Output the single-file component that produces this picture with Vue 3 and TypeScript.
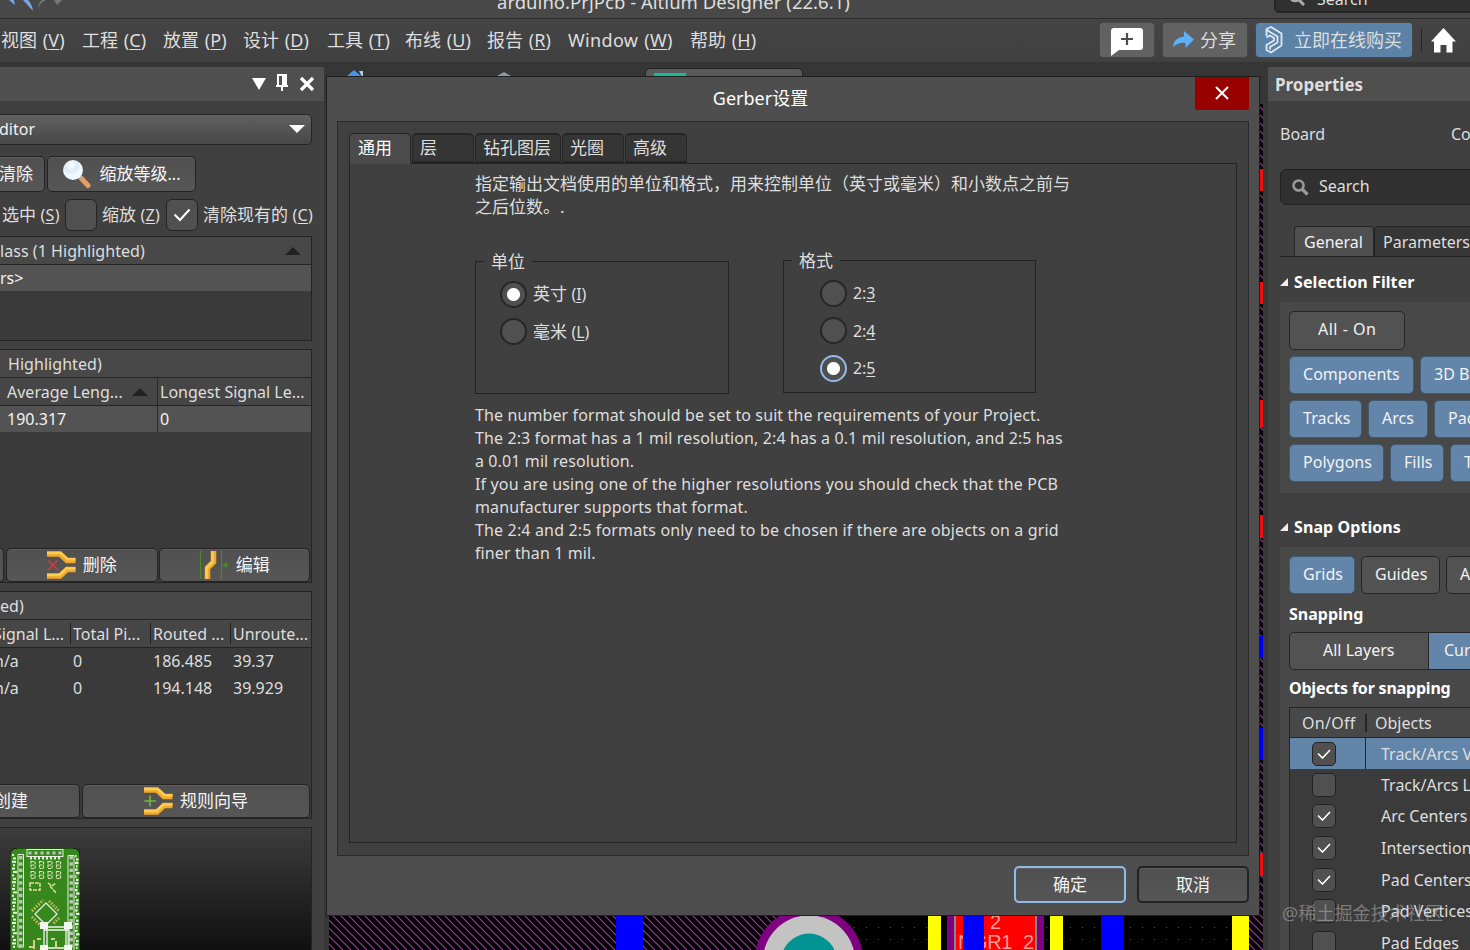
<script setup lang="ts">
interface Label { text: string; key: string }

const menus: Label[] = [
  { text: '视图', key: 'V' }, { text: '工程', key: 'C' }, { text: '放置', key: 'P' },
  { text: '设计', key: 'D' }, { text: '工具', key: 'T' }, { text: '布线', key: 'U' },
  { text: '报告', key: 'R' }, { text: 'Window', key: 'W' }, { text: '帮助', key: 'H' },
]
const units = [
  { text: '英寸', key: 'I', on: true },
  { text: '毫米', key: 'L', on: false },
]
const formats = [
  { key: '3', on: false }, { key: '4', on: false }, { key: '5', on: true },
]
const notes: string[] = [
  'The number format should be set to suit the requirements of your Project.',
  'The 2:3 format has a 1 mil resolution, 2:4 has a 0.1 mil resolution, and 2:5 has',
  'a 0.01 mil resolution.',
  'If you are using one of the higher resolutions you should check that the PCB',
  'manufacturer supports that format.',
  'The 2:4 and 2:5 formats only need to be chosen if there are objects on a grid',
  'finer than 1 mil.',
]
const snapRows = [
  { name: 'Track/Arcs Vertices', on: true }, { name: 'Track/Arcs Lines', on: false },
  { name: 'Arc Centers', on: true }, { name: 'Intersections', on: true },
  { name: 'Pad Centers', on: true }, { name: 'Pad Vertices', on: false },
  { name: 'Pad Edges', on: false },
]
const edgePads = [
  { y: 65, h: 22, c: '#f00f0f' }, { y: 178, h: 22, c: '#f00f0f' }, { y: 296, h: 27, c: '#f00f0f' },
  { y: 411, h: 23, c: '#f00f0f' }, { y: 532, h: 22, c: '#0000f0' }, { y: 624, h: 32, c: '#0000f0' },
  { y: 749, h: 23, c: '#f00f0f' },
]
const pins = Array.from({ length: 15 }, (_, i) => i)
const silk = Array.from({ length: 28 }, (_, i) => ({ y: 6 + i * 3.4, w: 2 + ((i * 7) % 3), o: (i * 5) % 2 }))
</script>

<template>
  <div class="screen">
    <header class="titlebar">
      <svg class="undo" width="66" height="18" viewBox="0 0 66 18">
        <path d="M9 0 L15 5 L14 0 Z M23 0 L33 11 Q32 4 28 0 Z" fill="#7ba4e8" />
        <path d="M38 10 Q39 3 46 0 L42 0 Q38 3 38 10Z M54 0 L57 5 L62 0Z" fill="#777" />
      </svg>
      <span class="app-title">arduino.PrjPcb - Altium Designer (22.6.1)</span>
      <div class="top-search">
        <svg width="18" height="18" viewBox="0 0 18 18"><circle cx="7" cy="7" r="5" fill="none" stroke="#aaa" stroke-width="2.6" /><path d="M11 11l5 5" stroke="#aaa" stroke-width="3" /></svg>
        <span>Search</span>
      </div>
    </header>

    <nav class="menubar">
      <div class="menus">
        <span v-for="m in menus" :key="m.key">{{ m.text }} (<u>{{ m.key }}</u>)</span>
      </div>
      <div class="actions">
        <button class="act note">
          <svg width="32" height="28" viewBox="0 0 32 28"><path d="M3 0H29Q32 0 32 3V19Q32 22 29 22H8L0 28V3Q0 0 3 0Z" fill="#fff" /><path d="M16 5V17M10 11H22" stroke="#4d4d4d" stroke-width="2.2" /></svg>
        </button>
        <button class="act share">
          <svg width="22" height="18" viewBox="0 0 22 18"><path d="M12 0L22 8.5L13.5 17V12Q6 11 1 16.500Q1 7 12 5.500Z" fill="#5eb0f7" /></svg>
          <span>分享</span>
        </button>
        <button class="act buy">
          <svg width="18" height="28" viewBox="0 0 18 28" fill="none" stroke="#dde8f2" stroke-width="1.8" stroke-linejoin="round">
            <path d="M1.500 10V3L6 1L16.500 7.500V19.500L6 26.500L1.500 24V19L9 14.500V12L5 9.500L1.500 11.500" />
            <path d="M5 6L12.500 10.500V16.500L5 21V23.500M1.500 3.500L5 6" />
          </svg>
          <span>立即在线购买</span>
        </button>
        <i class="rule"></i>
        <svg width="25" height="25" viewBox="0 0 25 25"><path d="M12.500 0L25 13.500H21.500V24.500H15.500V17H9.500V24.500H3V13.500H0Z" fill="#fff" /></svg>
      </div>
    </nav>

    <main class="work">
      <aside class="left">
        <div class="panel-head tools">
          <svg width="64" height="20" viewBox="0 0 64 20">
            <path d="M0 5H14L7 17Z" fill="#fff" />
            <path d="M24 1H35V12H36V14H31V18H29V14H24V12H25V1Z" fill="#fff" />
            <path d="M27 3H30V12H27Z" fill="#505050" />
            <path d="M49 5L61 17M61 5L49 17" stroke="#fff" stroke-width="3.2" />
          </svg>
        </div>
        <div class="combo"><span>ditor</span><svg width="16" height="8"><path d="M0 0H16L8 8Z" fill="#fff" /></svg></div>
        <div class="row-buttons">
          <button class="btn clear">清除</button>
          <button class="btn zoom">
            <svg width="30" height="30" viewBox="0 0 30 30">
              <defs><radialGradient id="lens" cx=".4" cy=".25"><stop offset="0" stop-color="#fff" /><stop offset=".65" stop-color="#dceaf4" /><stop offset="1" stop-color="#eef8ff" /></radialGradient></defs>
              <path d="M19 19L26 26.500" stroke="#e3a060" stroke-width="5" stroke-linecap="round" />
              <path d="M16 16L20 20" stroke="#a9b0b5" stroke-width="3" />
              <circle cx="11" cy="11" r="10" fill="url(#lens)" />
            </svg>
            <span>缩放等级<b>...</b></span>
          </button>
        </div>
        <div class="row-checks">
          <span class="ck sel">选中 <b>(<u>S</u>)</b></span><i class="box"></i>
          <span class="ck zm">缩放 <b>(<u>Z</u>)</b></span>
          <i class="box"><svg width="18" height="14" viewBox="0 0 18 14"><path d="M1.500 6.500L7 12L16.500 1.500" fill="none" stroke="#fff" stroke-width="2" /></svg></i>
          <span class="ck">清除现有的 <b>(<u>C</u>)</b></span>
        </div>
        <section class="list one">
          <div class="lh"><span>lass (1 Highlighted)</span><svg width="16" height="8"><path d="M0 8H16L8 0Z" fill="#222" /></svg></div>
          <div class="lr lit"><span>rs&gt;</span></div>
        </section>
        <section class="list two">
          <div class="lh"><span>Highlighted)</span></div>
          <div class="cols"><span>Average Leng...<svg width="16" height="8"><path d="M0 8H16L8 0Z" fill="#222" /></svg></span><span>Longest Signal Le...</span></div>
          <div class="cols lit"><span>190.317</span><span>0</span></div>
          <div class="foot">
            <button class="btn stub"></button>
            <button class="btn">
              <svg width="29" height="28" viewBox="0 0 29 28">
                <path d="M0 3H13L20 9.500H28.500M0 25H13L20 18.500H28.500" fill="none" stroke="#f2a92b" stroke-width="5.500" />
                <path d="M0 2H13.500L20.500 8.200H28.500M0 24H12.500L19.500 17.500H28.500" fill="none" stroke="#ffcb54" stroke-width="2.500" />
                <path d="M1.500 9.500L10.500 18.500M10.500 9.500L1.500 18.500" stroke="#d83a3f" stroke-width="1.500" />
              </svg>
              <span>删除</span>
            </button>
            <button class="btn">
              <svg width="30" height="28" viewBox="0 0 30 28">
                <path d="M1.500 0V28M22.500 0V28" stroke="#4f8a28" stroke-width="1.200" />
                <path d="M14.500 0V11L8.500 17V28" fill="none" stroke="#f2a92b" stroke-width="5.500" />
                <path d="M13.500 0V11L7.500 17V28" fill="none" stroke="#ffcb54" stroke-width="2.500" />
                <path d="M23 14L28 11V17ZM27 13.500H30V14.500H27Z" fill="#4f8a28" />
              </svg>
              <span>编辑</span>
            </button>
          </div>
        </section>
        <section class="list three">
          <div class="lh"><span>ed)</span></div>
          <div class="cols head"><span class="cut">Signal L...</span><span>Total Pi...</span><span>Routed ...</span><span>Unroute...</span></div>
          <div class="cols"><span class="cut na">n/a</span><span>0</span><span>186.485</span><span>39.37</span></div>
          <div class="cols"><span class="cut na">n/a</span><span>0</span><span>194.148</span><span>39.929</span></div>
          <div class="foot">
            <button class="btn create">创建</button>
            <button class="btn">
              <svg width="29" height="28" viewBox="0 0 29 28">
                <path d="M0 3H13L20 9.500H28.500M0 25H13L20 18.500H28.500" fill="none" stroke="#f2a92b" stroke-width="5.500" />
                <path d="M0 2H13.500L20.500 8.200H28.500M0 24H12.500L19.500 17.500H28.500" fill="none" stroke="#ffcb54" stroke-width="2.500" />
                <path d="M6 8.500V19.500M.5 14H12" stroke="#72b840" stroke-width="1.600" />
              </svg>
              <span>规则向导</span>
            </button>
          </div>
        </section>
        <section class="preview">
          <svg width="70" height="102" viewBox="0 0 70 102">
            <path d="M0 110V8Q0 0 8 0H62Q70 0 70 8V110Z" fill="#36871c" stroke="#0b1a06" />
            <rect x="17" y="1.500" width="36" height="7" fill="none" stroke="#e4efdf" />
            <rect v-for="n in 6" :key="'t' + n" :x="12.500 + n * 6" y="3.500" width="3" height="3" fill="#b9c9b5" />
            <path d="M8 6.500H13.500V99H8Z M58 7.500H64V110H58Z" fill="none" stroke="#e4efdf" />
            <g v-for="p in pins" :key="p" fill="#b9c9b5">
              <rect x="9" :y="8 + p * 6.300" width="3.400" height="3.400" />
              <rect x="59.500" :y="8 + p * 6.300" width="3.400" height="3.400" />
            </g>
            <g v-for="(s, i) in silk" :key="'s' + i" fill="#e6f2e0">
              <rect :x="2 + s.o" :y="s.y" :width="s.w" height="2" />
              <rect :x="65 + s.o" :y="s.y + 1" :width="s.w - 0.500" height="2.200" />
            </g>
            <g v-for="n in 4" :key="'c' + n">
              <g v-for="r in 2" :key="r" fill="none" stroke="#d8e5ba" stroke-width="1.200">
                <path :d="`M${12.500 + n * 8.500} ${3.500 + r * 10}h4v7h-4zM${12.500 + n * 8.500} ${7 + r * 10}h4`" stroke-dasharray="3 1" />
              </g>
            </g>
            <path d="M20 10H50" stroke="#e4efdf" stroke-width="3" stroke-dasharray="2 2" />
            <path d="M20 35V42H30V35ZM38 35l4 3 4-3M40 38l6 7" fill="none" stroke="#e4e0a0" stroke-width="1.500" stroke-dasharray="4 1" />
            <path d="M36 55L47 66L36 77L25 66Z" fill="none" stroke="#e4efdf" stroke-width="1.300" />
            <path d="M22 63L33 52M39 53L49 63M22 69L32 79M49 70L43 76" stroke="#d6bf62" stroke-width="3" stroke-dasharray="1.500 1.500" />
            <path d="M34 78V102M37 78V102M56 78V102M59 78V102M34 79H58M34 82H58M30 100H60" stroke="#f2f7ef" stroke-width="1.300" />
            <path d="M30 74h8v7h-8zM54 74h8v7h-8zM30 97h8v6h-8zM54 97h8v6h-8z" fill="#f4f8f2" />
            <path d="M27 91h4M41 91h4M24 92v9M46 93v8M19 99h4" stroke="#d6cf8a" stroke-width="2" />
          </svg>
        </section>
      </aside>

      <section class="center">
        <div class="doc-tabs">
          <svg width="20" height="7" viewBox="0 0 20 7"><path d="M0 7L8 0L16 7Z" fill="#4b93ea" /><path d="M13 1H17V7H16Z" fill="#a5cdf5" /></svg>
          <svg class="grey" width="14" height="4" viewBox="0 0 14 4"><path d="M0 4L7 0L14 4Z" fill="#8d9aa5" /></svg>
          <div class="doc"><i></i></div>
        </div>
        <svg class="board" width="934" height="846" viewBox="0 0 934 846">
          <defs>
            <pattern id="hatch" width="8" height="8" patternUnits="userSpaceOnUse"><path d="M-1 -1L9 9M-1 7L1 9M7 -1L9 1" stroke="#b32fb8" stroke-width="1.100" /></pattern>
            <pattern id="dots" width="12" height="12" patternUnits="userSpaceOnUse"><rect x="9" y="7" width="1" height="1" fill="#555" /></pattern>
          </defs>
          <rect width="934" height="846" fill="#000" />
          <rect width="480" height="846" fill="url(#hatch)" />
          <rect x="480" y="800" width="440" height="46" fill="url(#dots)" />
          <rect x="920" width="14" height="846" fill="url(#hatch)" />
          <rect v-for="e in edgePads" :key="e.y" x="931" :y="e.y" width="3" :height="e.h" :fill="e.c" />
          <rect x="287" y="800" width="27" height="46" fill="#00f" />
          <circle cx="480" cy="857.500" r="54.500" fill="#7f0080" />
          <circle cx="480" cy="857.500" r="46.200" fill="#c3c3c3" />
          <circle cx="480" cy="857.500" r="28" fill="#009392" />
          <rect x="599" y="800" width="13" height="46" fill="#ff0" />
          <rect x="618" y="800" width="97" height="46" fill="#7f0080" />
          <rect x="625" y="800" width="83" height="46" fill="#888" />
          <rect x="627" y="800" width="79" height="46" fill="#f00" />
          <text x="629" y="845" class="net" textLength="76">NGR1_2</text>
          <rect x="634" y="800" width="21" height="46" fill="#00f" />
          <text x="661" y="825" class="net">2</text>
          <rect x="721" y="800" width="13" height="46" fill="#ff0" />
          <rect x="772" y="800" width="23" height="46" fill="#00f" />
          <rect x="903" y="800" width="17" height="46" fill="#ff0" />
        </svg>
      </section>

      <aside class="right">
        <div class="panel-head"><b>Properties</b></div>
        <div class="kind"><span>Board</span><span>Components</span></div>
        <div class="search">
          <svg width="17" height="17" viewBox="0 0 17 17"><circle cx="6.500" cy="6.500" r="5" fill="none" stroke="#999" stroke-width="2.600" /><path d="M10.500 10.500L15.500 15.500" stroke="#999" stroke-width="3.200" /></svg>
          <span>Search</span>
        </div>
        <div class="ptabs"><span class="active">General</span><span>Parameters</span></div>
        <h3><svg width="8" height="8"><path d="M0 8H8V0Z" fill="#eee" /></svg><span>Selection Filter</span></h3>
        <div class="group filter">
          <div class="chips"><span class="chip off all">All - On</span></div>
          <div class="chips"><span class="chip c1">Components</span><span class="chip">3D Bodies</span></div>
          <div class="chips"><span class="chip c2">Tracks</span><span class="chip c3">Arcs</span><span class="chip">Pads</span></div>
          <div class="chips"><span class="chip c4">Polygons</span><span class="chip c5">Fills</span><span class="chip">Texts</span></div>
        </div>
        <h3><svg width="8" height="8"><path d="M0 8H8V0Z" fill="#eee" /></svg><span>Snap Options</span></h3>
        <div class="group snap">
          <div class="chips"><span class="chip c6">Grids</span><span class="chip off c7">Guides</span><span class="chip off c8">Axes</span></div>
          <h4>Snapping</h4>
          <div class="seg"><span>All Layers</span><span class="on">Current Layer</span></div>
          <h4 class="second">Objects for snapping</h4>
          <div class="objs">
            <div class="oh"><span>On/Off</span><i></i><span>Objects</span></div>
            <div v-for="(r, i) in snapRows" :key="r.name" class="or" :class="{ hot: i === 0 }">
              <span class="cell"><i class="mini"><svg v-if="r.on" width="14" height="10" viewBox="0 0 14 10"><path d="M1 4.500L5.500 9L13 1" fill="none" stroke="#fff" stroke-width="1.600" /></svg></i></span>
              <span class="nm">{{ r.name }}</span>
            </div>
          </div>
        </div>
      </aside>
    </main>

    <div class="dialog">
      <div class="dlg-head">
        <span>Gerber设置</span>
        <button class="close"><svg width="14" height="14"><path d="M1 1L13 13M13 1L1 13" stroke="#fff" stroke-width="2" /></svg></button>
      </div>
      <div class="dlg-body">
        <div class="dtabs">
          <span class="active">通用</span><span>层</span><span>钻孔图层</span><span>光圈</span><span>高级</span>
        </div>
        <div class="page">
          <p class="intro">指定输出文档使用的单位和格式，用来控制单位（英寸或毫米）和小数点之前与<br>之后位数。.</p>
          <div class="groups">
            <fieldset>
              <legend>单位</legend>
              <label v-for="u in units" :key="u.key"><i class="radio" :class="{ on: u.on }"></i><span>{{ u.text }} <b>(<u>{{ u.key }}</u>)</b></span></label>
            </fieldset>
            <fieldset class="fmt">
              <legend>格式</legend>
              <label v-for="f in formats" :key="f.key"><i class="radio" :class="{ on: f.on, focus: f.on }"></i><span><b>2:<u>{{ f.key }}</u></b></span></label>
            </fieldset>
          </div>
          <div class="notes"><div v-for="n in notes" :key="n">{{ n }}</div></div>
        </div>
      </div>
      <div class="dlg-foot"><button class="btn ok">确定</button><button class="btn">取消</button></div>
    </div>
    <div class="mark">@稀土掘金技术社区</div>
  </div>
</template>

<style>
body { overflow: hidden; background: #404040; }
</style>

<style scoped>
* { box-sizing: border-box; margin: 0; padding: 0; }
.screen { position: relative; width: 1470px; height: 950px; overflow: hidden; display: flex; flex-direction: column; background: #3f3f3f; color: #dedede; font: 16px/22px "Noto Sans", "Noto Sans CJK SC", sans-serif; white-space: nowrap; }
svg { display: block; flex: none; }
button { font: inherit; color: inherit; border: 0; background: none; display: flex; align-items: center; justify-content: center; }
u { text-decoration: underline; text-underline-offset: 2px; text-decoration-thickness: 1px; text-decoration-skip-ink: none; }
b { font-weight: 400; font-size: 16px; }

.titlebar { flex: none; height: 19px; background: #484848; border-bottom: 1px solid #2c2c2c; display: flex; align-items: flex-end; overflow: hidden; }
.undo { width: 66px; }
.app-title { flex: none; margin-left: 431px; width: 777px; font-size: 18.500px; line-height: 24px; margin-bottom: 4px; letter-spacing: .03px; }
.top-search { width: 210px; height: 36px; margin-bottom: 5px; border: 2px solid #262626; border-radius: 5px; background: #303030; display: flex; align-items: flex-end; gap: 11px; padding: 0 0 3px 12px; flex: none; }
.top-search svg { margin-bottom: 1px; }
.top-search span { line-height: 20px; margin-bottom: -1px; }

.menubar { flex: none; height: 43px; display: flex; justify-content: space-between; align-items: center; background: linear-gradient(#444, #404040); }
.menus { display: grid; grid-template-columns: 81px 81px 80px 84px 78px 82px 81px 122px auto; padding: 0 0 2px 1px; font-size: 18px; line-height: 26px; word-spacing: .8px; letter-spacing: .1px; }
.menus span:nth-child(8) { letter-spacing: .35px; }
.actions { display: flex; align-items: center; padding: 0 14px 1px 0; }
.act { height: 34px; border-radius: 4px; background: #626262; font-size: 18px; box-shadow: 0 0 1px #777; }
.note { width: 54px; margin-right: 9px; }
.note svg { margin-top: 3px; }
.share { width: 84px; gap: 6px; margin-right: 9px; padding-right: 2px; }
.share span, .buy span { margin-top: -1px; }
.buy { width: 156px; gap: 11px; padding-right: 1px; background: #5d82a7; }
.rule { width: 1px; height: 22px; background: #252525; margin: 0 9px; }

.work { flex: 1; display: flex; min-height: 0; background: #363636; }
.panel-head { height: 34px; background: #4f4f4f; }
.left { width: 324px; flex: none; margin-top: 5px; background: #404040; overflow: hidden; }
.tools { display: flex; align-items: center; padding: 0 0 2px 252px; }
.combo { height: 31px; width: 312px; margin-top: 13px; border: 1px solid #252525; border-left: 0; border-radius: 0 5px 5px 0; background: linear-gradient(#616161, #474747); display: flex; align-items: center; justify-content: space-between; padding: 0 6px 2px 0; color: #f2f2f2; }
.combo span { margin-left: -1px; }
.btn { border: 1px solid #232323; border-radius: 5px; background: linear-gradient(#505050, #565656); box-shadow: inset 0 1px #5d5d5d; color: #f4f4f4; font-size: 17px; }
.row-buttons { display: flex; gap: 2px; margin-top: 11px; height: 36px; }
.clear { width: 45px; border-left: 0; border-radius: 0 5px 5px 0; justify-content: flex-start; text-indent: -1px; }
.zoom { width: 149px; gap: 8px; padding-right: 1px; }
.row-checks { display: flex; align-items: center; height: 32px; margin-top: 7px; font-size: 17px; }
.ck b { letter-spacing: .3px; }
.sel { width: 65px; padding-left: 2px; }
.zm { width: 64px; }
.box { width: 32px; height: 32px; border: 1px solid #232323; border-radius: 6px; background: #505050; display: flex; align-items: center; justify-content: center; flex: none; margin-right: 5px; }
.list { width: 312px; border: 1px solid #242424; border-left: 0; background: #3a3a3a; display: flex; flex-direction: column; overflow: hidden; }
.one { height: 105px; margin-top: 5px; }
.two { height: 234px; margin-top: 8px; }
.three { height: 228px; margin-top: 8px; }
.lh { height: 28px; flex: none; background: #484848; border-bottom: 1px solid #242424; display: flex; align-items: center; justify-content: space-between; padding-right: 10px; letter-spacing: .05px; }
.two .lh { padding-left: 8px; }
.lr { height: 26px; display: flex; align-items: center; }
.lit { background: #535353 !important; color: #f2f2f2; }
.cols { display: grid; height: 28px; flex: none; align-items: center; }
.two .cols { grid-template-columns: 157px 1fr; background: #464646; border-bottom: 1px solid #242424; }
.two .cols.lit { height: 26px; border: 0; }
.two .cols span { padding-left: 7px; display: flex; align-items: center; gap: 9px; height: 100%; }
.two .cols span + span { border-left: 1px solid #2a2a2a; padding-left: 2px; }
.two .cols.lit span { line-height: 20px; padding-bottom: 1px; }
.three .cols { grid-template-columns: 70px 80px 80px 1fr; height: 27px; }
.three .head { height: 28px; background: #464646; border-bottom: 1px solid #242424; }
.three .cols span { padding-left: 3px; line-height: 20px; padding-bottom: 1px; }
.three .head span { padding: 1px 0 0 2px; }
.three .head span + span { border-left: 1px solid #222; }
.three .cols .cut { padding-left: 0; margin-left: -7px; }
.three .cols .na { margin-left: -6px; }
.foot { margin-top: auto; display: flex; gap: 2px; height: 34px; flex: none; }
.two .foot { gap: 1px; padding-right: 1px; }
.three .foot { padding-right: 1px; }
.foot .btn { flex: 1; gap: 7px; }
.foot .stub { flex: none; width: 4px; margin-right: 1px; border-left: 0; border-radius: 0 5px 5px 0; }
.foot .create { flex: none; width: 80px; border-left: 0; border-radius: 0 5px 5px 0; justify-content: flex-start; text-indent: -6px; }
.preview { width: 312px; height: 130px; margin-top: 8px; border: 1px solid #242424; border-left: 0; background: linear-gradient(#3c3c3c, #101010 95%); padding: 20px 0 0 10px; }

.center { flex: 1; overflow: hidden; }
.doc-tabs { height: 42px; display: flex; padding-left: 22px; }
.doc-tabs > svg { margin-top: 8px; }
.doc-tabs .grey { margin: 10px 0 0 131px; }
.doc { width: 158px; height: 34px; margin: 6px 0 0 134px; background: #5a5a5a; border: 1px solid #222; border-radius: 5px; padding: 4px 0 0 8px; }
.doc i { display: block; width: 32px; height: 6px; background: #13bd98; }
.board { margin-left: 5px; }
.net { font: 20px "Liberation Sans", sans-serif; fill: #ff9c9c; }

.right { width: 202px; flex: none; margin-top: 5px; background: #404040; overflow: hidden; }
.right .panel-head { padding: 7px 7px 0; }
.right b { font-size: 17px; font-weight: 700; }
.kind { margin-top: 22px; display: grid; grid-template-columns: 171px 1fr; padding-left: 12px; }
.search { margin: 24px 0 0 12px; height: 36px; width: 210px; border: 1px solid #222; border-radius: 6px; background: #303030; display: flex; align-items: center; gap: 10px; padding: 0 0 2px 11px; }
.search svg { margin-top: 3px; }
.ptabs { margin: 21px 0 0 12px; padding-left: 14px; height: 31px; border-bottom: 1px solid #242424; display: flex; }
.ptabs span { border: 1px solid #242424; border-bottom: 0; border-radius: 4px 4px 0 0; background: #363636; height: 30px; line-height: 30px; padding: 0 8px; width: 120px; flex: none; }
.ptabs .active { width: 80px; padding-left: 9px; background: #4f4f4f; color: #f2f2f2; }
h3 { font-size: 16px; line-height: 22px; display: flex; align-items: center; gap: 6px; padding-left: 12px; margin-top: 14px; color: #fff; letter-spacing: .08px; }
h4 { font-size: 16px; line-height: 22px; color: #fff; }
.group { margin-left: 12px; padding: 9px 0 0 9px; background: #484848; }
.filter { height: 191px; margin-top: 9px; display: flex; flex-direction: column; gap: 6px; }
.filter .chips:first-child { margin-bottom: 1px; }
.filter + h3 { margin-top: 23px; }
.chips { display: flex; gap: 6px; height: 38px; flex: none; }
.chip { flex: none; width: 100px; height: 38px; border: 1px solid #425970; border-radius: 5px; background: #6285a9; color: #f2f2f2; line-height: 34px; padding-left: 13px; letter-spacing: .03px; }
.chip.off { background: #525252; border-color: #252525; }
.chip.all { width: 116px; padding-left: 28px; letter-spacing: .5px; height: 39px; }
.c1 { width: 125px; } .c2 { width: 73px; } .c3 { width: 60px; } .c4 { width: 95px; } .c5 { width: 54px; }
.c6 { width: 66px; } .c7 { width: 79px; }
.snap { margin-top: 9px; height: 420px; }
.snap h4 { margin-top: 9px; }
.seg { display: flex; height: 38px; margin-top: 7px; line-height: 34px; width: 240px; border: 1px solid #252525; border-radius: 5px; background: #525252; overflow: hidden; color: #f2f2f2; }
.seg span { width: 138px; padding-left: 33px; flex: none; }
.seg .on { background: #6285a9; border-left: 1px solid #252525; padding-left: 15px; }
.snap .second { margin-top: 7px; letter-spacing: -.2px; }
.objs { margin-top: 8px; border: 1px solid #252525; border-right: 0; background: #3b3b3b; height: 250px; }
.oh { height: 30px; border-bottom: 1px solid #252525; background: #484848; display: grid; grid-template-columns: 75px 10px 1fr; align-items: center; }
.oh span:first-child { padding-left: 12px; letter-spacing: .3px; }
.oh i { width: 2px; height: 18px; background: #252525; }
.or { display: flex; height: 31.600px; align-items: center; }
.or.hot { background: #6285a9; height: 31px; }
.hot .cell { border-right: 1px solid #252525; }
.cell { width: 76px; height: 100%; display: flex; align-items: center; padding-left: 22px; flex: none; }
.mini { width: 24px; height: 24px; border: 1px solid #222; border-radius: 5px; background: #505050; display: flex; align-items: center; justify-content: center; }
.nm { padding-left: 15px; }

.dialog { position: absolute; left: 326px; top: 76px; width: 934px; height: 840px; border: 1px solid #1f1f1f; background: #4e4e4e; padding: 0 10px; }
.dlg-head { height: 44px; position: relative; text-align: center; line-height: 42px; font-size: 18px; color: #fff; padding-right: 65px; }
.close { position: absolute; right: 0; top: 0; width: 54px; height: 33px; padding-bottom: 2px; background: #990000; border-radius: 0 0 2px 2px; }
.dlg-body { height: 735px; border: 1px solid #2a2a2a; background: #404040; padding: 11px 11px 0; }
.dtabs { display: flex; gap: 1px; height: 30px; font-size: 17px; }
.dtabs span { width: 62px; height: 30px; border: 1px solid #252525; border-width: 2px 1px; border-radius: 5px 5px 0 0; background: #353535; line-height: 25px; padding-left: 7px; }
.dtabs span:nth-child(3) { width: 86px; }
.dtabs .active { background: #4b4b4b; border-bottom: 0; height: 31px; border-width: 1px 1px 0; color: #fff; line-height: 27px; z-index: 1; padding-left: 8px; }
.page { height: 680px; border: 1px solid #242424; padding: 8px 0 0 125px; }
.intro { font-size: 17px; line-height: 23px; }
.groups { display: flex; margin-top: 32px; gap: 54px; align-items: flex-start; }
fieldset { width: 254px; height: 144px; border: 1px solid #222; padding: 8px 0 0 24px; }
legend { margin-left: -16px; padding: 1px 7px 0; font-size: 17px; line-height: 21px; }
.fmt { width: 253px; margin-top: -1px; padding-left: 36px; }
.fmt legend { margin-left: -28px; }
label { display: flex; align-items: center; gap: 6px; height: 28px; font-size: 17px; margin-bottom: 9.700px; }
label b { letter-spacing: -.1px; }
.radio { width: 27px; height: 27px; border: 2px solid #262626; border-radius: 50%; background: #505050; }
.radio.on { background: radial-gradient(circle, #fff 6px, #505050 7px); }
.radio.focus { border-color: #92bce8; }
.notes { margin-top: 10px; line-height: 23px; letter-spacing: .11px; }
.notes div:nth-child(4), .notes div:nth-child(6) { letter-spacing: .155px; }
.dlg-foot { display: flex; justify-content: flex-end; gap: 11px; padding-top: 10px; }
.dlg-foot .btn { width: 112px; height: 37px; border-width: 2px; }
.dlg-foot .ok { border-color: #92bce8; }
.mark { position: absolute; left: 1282px; top: 902px; font-size: 18px; letter-spacing: .1px; color: rgba(190, 190, 190, .5); }
</style>
